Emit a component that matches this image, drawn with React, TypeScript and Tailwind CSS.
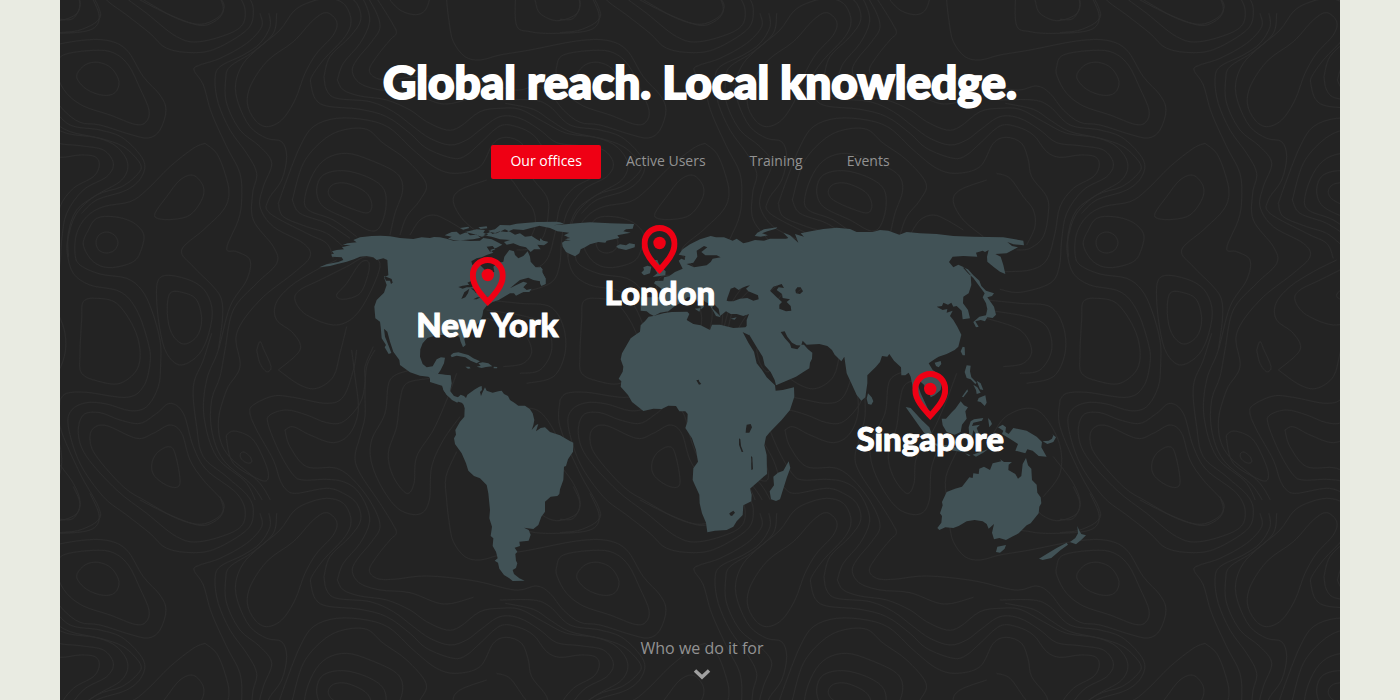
import { useState } from "react";

type Point = [number, number];

const parse = (source: string): Point[] =>
  source.split(" ").map((pair) => pair.split(",").map(Number) as Point);

/** Catmull-Rom spline through the given points. */
function smooth(source: string, closed = false): string {
  const p = parse(source);
  const n = p.length;
  const at = (i: number): Point =>
    closed ? p[(i + n) % n] : p[Math.max(0, Math.min(n - 1, i))];
  let d = `M${p[0][0]} ${p[0][1]}`;
  const last = closed ? n : n - 1;
  for (let i = 0; i < last; i++) {
    const [a, b, c, e] = [at(i - 1), at(i), at(i + 1), at(i + 2)];
    d += `C${b[0] + (c[0] - a[0]) / 6} ${b[1] + (c[1] - a[1]) / 6} ${c[0] - (e[0] - b[0]) / 6} ${c[1] - (e[1] - b[1]) / 6} ${c[0]} ${c[1]}`;
  }
  return closed ? d + "Z" : d;
}

const closedContours = [
  "50,230 75,195 115,187 155,205 177,245 165,278 130,286 80,268",
  "-10,200 10,165 100,151 160,158 205,195 240,265 267,330 258,366 225,373 150,345 70,318 20,280 -8,230",
  "800,38 830,65 820,105 770,160 735,220 705,300 665,360 620,380 585,360 562,310 575,250 625,180 700,125 760,60",
  "70,735 85,690 110,655 160,650 215,665 250,700 245,745 220,785 150,803 100,785",
  "108,728 117,705 140,696 163,705 174,728 163,751 140,759 117,751",
  "285,640 320,590 360,540 400,526 430,560 425,600 390,645 340,658 295,656",
  "325,1340 345,1360 360,1450 330,1460 285,1430 275,1395 290,1360",
  "90,1320 100,1285 140,1277 230,1315 280,1300 330,1275 365,1300 390,1380 430,1440 485,1500 490,1530 470,1555 420,1573 350,1555 260,1505 190,1460 110,1370",
  "55,1300 70,1245 120,1238 180,1260 240,1270 290,1240 330,1210 370,1240 400,1340 440,1410 530,1480 556,1540 530,1590 420,1625 350,1610 260,1540 170,1470 80,1370",
  "65,960 60,1060 65,1120 120,1145 180,1150 230,1110 240,1050 220,980 170,910 110,895 70,905",
  "330,880 370,878 410,900 425,960 410,1010 370,1032 335,1000 322,940",
  "290,900 295,840 330,826 400,845 440,880 457,940 440,1020 410,1070 360,1095 320,1060 300,990",
  "541,1362 552,1356 570,1370 575,1386 562,1389 545,1378",
  "500,1320 505,1300 530,1294 580,1320 620,1400 622,1440 590,1435 520,1390",
  "805,575 820,553 860,550 915,575 935,610 925,638 880,628 820,600",
  "770,570 790,525 850,512 920,530 970,565 978,620 960,680 930,692 870,660 790,620",
  "705,900 720,870 780,840 860,800 920,770 960,800 900,930 830,975 740,945",
  "830,885 860,850 900,790 925,785 925,820 900,880 850,898",
];

const openContours = [
  "1190,1355 1158,1430 1160,1500 1168,1570 1180,1625 1215,1670 1260,1680 1320,1665 1410,1650 1550,1623 1640,1621 1700,1650 1750,1730 1800,1785 1818,1830 1800,1890 1765,1914 1710,1903 1620,1875 1560,1867 1510,1830 1470,1780 1430,1758 1365,1770 1240,1742 1100,1728 1000,1738 950,1735 928,1710 950,1670 990,1620 1009,1600 1000,1575 960,1510 900,1420 885,1370 900,1310 915,1250 915,1180 920,1100 945,1050",
  "0,-300 20,-320 80,-323 200,-308 250,-340 270,-410 265,-470 230,-570 180,-625 90,-645 40,-680 22,-740 25,-790 50,-860 110,-915 185,-940 235,-980 240,-1010 190,-1060 120,-1085 30,-1105 -30,-1140 -80,-1172 -164,-1190",
  "832,240 850,270 900,288 980,300 1050,330 1100,365 1160,390 1200,380 1260,335 1320,325 1380,328 1450,365 1520,400 1610,413 1670,440 1703,490 1685,540 1610,585 1550,630 1525,700 1525,770",
  "1320,300 1420,300 1470,320 1530,375 1620,390 1690,415 1750,480 1745,530 1700,570 1610,600 1565,640",
  "832,240 850,190 900,130 928,70 920,20 890,-30 850,-55 800,-62 730,-60 700,-75 660,-140 625,-225 630,-255 680,-270 740,-255 800,-232 850,-235 900,-290 915,-350 915,-400 940,-460",
  "792,230 800,270 830,295 930,305 1000,335 1060,380 1110,415 1170,435 1220,420 1260,390 1320,350 1380,355 1440,390 1490,428 1560,437 1630,450 1660,490 1640,530 1570,570 1520,640 1505,720 1498,800 1470,850 1380,877 1320,868",
  "792,230 810,170 870,110 902,60 890,10 850,-20 800,-35 710,-20 680,-30 660,-60 640,-120 590,-210 570,-260 580,-285 640,-312 700,-308 800,-290 850,-310 880,-390 890,-450",
  "752,250 765,295 800,318 900,328 980,350 1050,400 1100,445 1180,475 1220,465 1260,430 1320,378 1370,380 1420,405 1460,455 1500,472 1560,465 1605,470 1618,495 1600,530 1540,565 1500,620 1485,700 1460,780 1410,810 1330,815",
  "752,250 755,230 790,180 855,110 873,60 850,10 800,-5 740,10 700,35 660,90 600,140 550,190 527,250 535,310 570,380 620,415 665,425 680,470 665,540 625,600 630,640 740,700 800,730 820,775",
  "655,610 680,540 720,440 760,380 830,355 920,360 990,385 1060,450 1130,505 1190,520 1260,500 1300,430 1340,412 1385,430 1405,480 1415,530 1460,590 1465,640 1450,710 1410,745 1370,750",
  "655,610 670,650 740,680 800,700 850,740",
  "697,600 730,490 790,420 850,390 920,388 970,430 1040,480 1098,550 1080,600 1040,650 1020,705",
  "697,600 720,640 800,670 870,715",
  "890,710 820,660 745,630 735,590 760,520 800,475 860,460 930,480 1010,520 1028,570 1005,640 990,705",
  "1310,520 1350,535 1390,590 1420,630 1425,680 1400,735",
  "435,430 470,460 495,520 507,580 490,630 430,690 365,750 400,800 460,860 485,900 487,960 475,1050",
  "435,430 400,445 330,500 260,570 210,605 130,620 80,650 50,700 45,760 60,795 120,822 200,835 245,870 275,930 300,1020 302,1090 295,1160 260,1220 210,1232 140,1212 80,1208 35,1230 25,1280 60,1390 130,1490 200,1545 270,1600 320,1645 400,1658 470,1645 560,1590 580,1540 565,1490 500,1430 430,1370 410,1280 400,1160 430,1080 455,1000",
  "600,1540 605,1580 560,1630 480,1675 420,1695 402,1710 430,1755 455,1840 500,1940 540,2020 545,2100 535,2160 500,2245 530,2255 570,2280 560,2340 510,2420 475,2550 440,2640 432,2750 470,2870 560,2950 600,3040",
  "627,1540 630,1580 600,1630 550,1665 480,1700 465,1740 475,1810 510,1890 560,1960 590,2020 578,2080 580,2160 640,2240 650,2290 590,2350 520,2430 495,2550 480,2630 455,2700 455,2790 490,2880 580,2960 627,3040",
  "650,1540 640,1600 580,1655 510,1700 497,1740 500,1810 540,1890 600,1940 635,1990 610,2060 600,2120 640,2180 730,2230 750,2270 700,2320 600,2400 530,2500 540,2600 500,2670 475,2770 500,2860 600,2950 650,3040",
  "0,1200 0,1280 60,1420 115,1520 115,1560 60,1590 0,1598",
  "-20,1370 40,1450 60,1510 40,1555 0,1558",
  "240,0 330,45 420,76 470,60 490,30 480,-10",
  "655,1110 720,1155 770,1165 820,1130 840,1060 860,980",
  "655,1110 720,1050 700,1000 650,960 648,910 690,860 760,815 830,780",
  "590,1050 600,1025 612,1050 633,1100 620,1115 600,1090 590,1050",
  "675,1290 700,1280 750,1305 820,1328 870,1300 895,1230 885,1130 875,1050",
  "675,1290 690,1340 740,1400 830,1405 890,1450 940,1520 960,1580 935,1625 890,1680 877,1715 900,1750 960,1770 1050,1778 1150,1812 1240,1792",
  "1110,1135 1040,1150 1020,1200 1010,1280 985,1360 1000,1430 1040,1480 1062,1450 1070,1370 1120,1290 1160,1200 1190,1120",
  "1050,1110 990,1140 975,1240 935,1320 935,1390 970,1470 1020,1530 1080,1542 1108,1500 1115,1400 1150,1320 1200,1250",
  "1370,1430 1368,1570 1410,1595 1490,1600 1590,1590 1618,1550 1590,1480",
  "1425,1500 1440,1540 1490,1562 1545,1545 1560,1510 1540,1460",
  "1280,540 1200,570 1180,605 1210,660 1270,710",
  "1050,705 1080,660 1120,645 1160,660 1210,690",
  "1280,900 1380,910 1470,920 1510,980 1515,1060 1480,1130 1400,1150",
  "1280,930 1400,950 1460,980 1475,1050 1440,1110 1380,1120",
  "1280,955 1380,990 1415,1050 1390,1090 1330,1100",
  "1300,1300 1337,1250 1400,1225 1450,1245 1498,1330 1500,1420 1450,1490",
];

const tiles = [-1500, 0, 1500];

function Contours() {
  return (
    <svg className="absolute inset-0 h-full w-full" aria-hidden="true">
      <defs>
        <g id="contour-lines" fill="none" stroke="#2c2c2c" strokeWidth="3">
          {closedContours.map((c) => (
            <path key={c} d={smooth(c, true)} />
          ))}
          {openContours.map((c) => (
            <path key={c} d={smooth(c)} />
          ))}
        </g>
        <pattern id="contours" width="500" height="500" patternUnits="userSpaceOnUse">
          <g transform="scale(0.33333)">
            {tiles.flatMap((x) =>
              tiles.map((y) => (
                <use key={`${x}/${y}`} href="#contour-lines" x={x} y={y} />
              )),
            )}
          </g>
        </pattern>
      </defs>
      <rect width="100%" height="100%" fill="url(#contours)" />
    </svg>
  );
}

type Region = { name: string; x: number; y: number; shapes: string[] };

const regions: Region[] = [
  {
    name: "north-america",
    x: 310,
    y: 210,
    shapes: [
      "28,172 50,163 85,156 100,150 95,142 66,140 64,133 72,131 66,124 80,120 102,118 96,112 122,105 98,105 112,100 140,97 130,90 150,82 185,78 212,77 240,79 270,84 310,87 335,82 360,84 372,81 390,82 410,86 430,92 450,90 480,93 510,92 520,84 545,88 560,95 577,104 560,113 540,120 550,128 530,135 515,142 500,145 484,154 487,165 510,165 525,180 540,190 553,185 550,170 563,160 580,155 583,140 598,120 612,124 615,135 625,145 640,138 653,124 660,140 662,155 677,172 693,172 698,188 706,205 706,222 692,224 690,214 670,210 655,203 630,210 615,222 600,235 618,226 640,215 652,219 640,232 650,240 665,236 658,246 640,246 618,257 612,250 600,250 580,262 566,270 548,276 530,287 520,300 517,318 510,333 500,345 480,365 468,378 463,388 467,405 459,412 452,395 448,380 436,376 420,379 408,374 380,376 352,384 338,400 331,418 330,440 338,462 350,472 368,469 380,448 393,442 405,443 402,460 392,480 384,492 400,494 422,497 425,520 420,545 430,559 445,564 452,558 462,560 475,578 468,590 455,578 445,575 430,570 410,555 400,540 395,522 375,515 355,500 330,497 300,487 270,465 268,450 250,425 240,395 232,365 222,356 225,380 235,405 244,429 236,432 224,412 228,405 215,385 212,350 210,335 196,325 193,290 200,270 222,248 230,225 222,202 235,196 232,150 220,145 200,150 190,142 170,138 150,140 132,148 110,155 82,162 60,168",
      "222,198 232,202 245,207 248,218 243,222 240,212 228,212",
      "422,436 430,429 445,427 475,435 490,445 510,454 500,460 482,452 466,442 440,437 425,442",
      "505,460 518,457 535,460 547,469 528,471 515,474 500,470 512,467",
      "466,470 478,470 482,475 474,476",
      "551,470 562,471 561,475 551,475",
      "404,76 425,66 440,65 450,74 470,66 480,76 500,74 512,83 490,88 460,90 430,90 414,86 425,80",
      "450,54 475,50 478,54 460,59",
      "465,66 500,58 525,60 520,68 535,74 515,80 490,72",
      "505,52 530,49 532,55 512,57",
      "520,76 540,66 560,70 585,58 600,65 615,74 630,70 645,80 665,78 680,88 693,95 715,97 702,106 682,104 692,118 672,118 662,126 648,112 630,108 610,100 590,104 582,96 600,90 570,88 545,80",
      "535,62 555,58 570,45 600,46 620,41 680,36 740,35 752,40 715,43 722,48 690,47 660,55 640,60 610,58 590,66 570,64 548,72",
      "530,110 548,108 556,118 540,125",
      "445,231 458,227 478,224 472,218 482,214 495,226 485,232 470,232 458,236",
      "454,267 463,247 478,236 474,250 466,262",
      "482,235 500,236 506,246 498,250 492,242",
      "490,268 502,262 512,262 500,268",
      "515,262 532,258 528,264 518,266",
    ],
  },
  {
    name: "south-america",
    x: 430,
    y: 370,
    shapes: [
      "0,0 20,12 62,16 62,42 58,60 72,78 84,82 92,74 102,78 108,84 112,74 135,58 148,50 155,48 156,60 150,66 153,78 158,66 165,52 170,62 188,68 205,64 215,62 222,72 234,78 240,90 255,100 265,107 285,107 300,118 308,130 313,150 310,166 305,180 318,165 325,162 318,184 332,174 345,172 360,186 390,196 418,212 430,218 429,245 414,268 408,288 402,290 400,330 390,358 388,372 382,378 362,380 345,395 345,425 334,440 325,465 310,477 282,473 296,480 302,494 296,512 268,515 270,528 254,533 262,545 256,552 258,572 262,580 258,594 248,600 252,612 268,625 284,632 248,633 238,625 222,615 208,596 204,578 194,572 203,565 198,545 188,528 190,505 182,498 186,470 178,445 180,420 175,370 170,345 150,325 132,318 115,302 108,280 95,250 75,222 72,205 78,194 76,180 90,155 103,140 104,115 98,95 90,84 82,98 66,90 52,76 42,62 38,48 0,36",
    ],
  },
  {
    name: "greenland",
    x: 540,
    y: 210,
    shapes: [
      "0,36 60,37 72,41 40,46 60,44 110,40 150,37 210,40 282,42 278,56 258,58 250,64 272,68 232,76 238,84 200,92 196,98 175,96 150,103 135,112 122,118 118,130 105,139 90,132 78,126 68,110 66,98 75,92 92,92 75,88 90,84 72,76 88,68 52,64 30,54 0,48",
      "229,109 240,103 258,106 268,100 285,103 284,112 258,120 234,115",
      "0,85 10,92 24,95 12,102 0,104",
      "0,170 8,178 6,188 17,205 17,222 4,228 0,218",
      "304,188 312,180 310,172 322,167 334,170 330,190 312,196",
      "343,150 352,150 356,160 366,174 377,184 376,196 338,201 352,190 346,180 352,172 342,166",
      "464,296 482,294 478,305",
      "572,326 590,322 584,329",
    ],
  },
  {
    name: "eurasia",
    x: 740,
    y: 210,
    shapes: [
      "-184,134 -172,118 -150,103 -120,88 -88,78 -72,82 -48,82 -22,92 -10,86 10,100 26,96 45,90 72,92 90,86 138,86 145,84 130,68 150,76 175,98 165,72 192,80 182,70 212,64 250,57 290,53 330,57 350,66 398,66 420,60 445,62 478,74 500,66 540,70 590,72 640,78 700,80 790,82 850,92 852,106 820,103 802,96 816,108 834,112 800,130 766,132 782,140 790,165 796,192 780,185 762,172 742,155 741,140 746,120 735,126 728,122 708,128 712,140 670,138 638,140 627,156 640,172 655,164 672,172 692,195 694,225 686,250 670,260 669,280 684,300 690,325 668,328 665,302 650,288 640,290 634,278 624,284 610,278 606,288 590,290 608,300 622,297 620,308 638,302 630,318 640,330 652,350 664,374 655,410 644,420 620,432 596,440 586,446 566,460 578,480 596,492 606,515 602,540 584,556 572,562 568,548 558,544 552,524 538,512 532,520 542,550 556,580 568,606 574,626 562,620 545,596 530,565 520,540 512,500 506,488 496,496 484,496 483,472 462,452 448,432 442,440 426,438 420,456 408,470 382,496 382,520 376,562 364,572 350,555 334,520 320,490 313,440 304,454 284,434 276,420 262,408 238,402 200,404 188,392 184,405 170,406 156,398 142,380 134,364 122,366 134,384 150,402 154,414 172,418 184,404 192,404 204,418 217,428 216,446 210,458 208,475 190,486 168,500 108,526 104,510 92,486 74,466 68,440 48,408 25,370 8,362 20,352 20,330 27,312 10,318 -10,312 -28,312 -42,304 -60,318 -64,296 -78,282 -84,294 -62,316 -58,322 -72,318 -82,300 -95,280 -105,275 -112,268 -125,262 -108,290 -116,298 -122,280 -140,260 -158,262 -172,275 -195,288 -215,304 -240,308 -258,318 -270,312 -280,304 -298,302 -298,262 -240,262 -236,236 -258,220 -254,213 -230,212 -228,202 -212,198 -195,186 -172,176 -184,152 -176,146 -166,150 -164,138",
      "-160,162 -140,158 -128,140 -130,122 -108,108 -98,112 -116,126 -104,136 -70,136 -58,142 -82,146 -88,156 -100,166 -138,172",
      "-38,264 -28,236 -16,232 -4,240 5,234 20,228 30,226 18,236 25,244 54,256 56,268 40,272 22,264 0,266 -20,274 -34,274 -40,272",
      "90,242 100,230 125,222 132,234 116,232 110,240 126,252 128,264 150,268 140,276 152,288 154,302 138,304 118,296 118,284 126,276 110,262",
      "166,240 172,232 182,232 189,244 180,252 168,250",
      "44,78 52,68 72,58 112,52 108,56 82,64 66,70 84,76 62,80",
      "384,550 395,562 400,574 394,584 384,582 380,566",
      "584,458 602,453 604,462 596,472 588,468",
      "668,410 674,412 675,436 668,436 662,424",
      "668,172 684,178 700,196 718,212 724,228 738,242 762,250 756,258 742,262 752,276 762,290 768,314 758,324 742,322 735,334 722,330 706,334 716,350 708,352 700,336 718,320 738,316 742,298 738,280 728,262 734,250 716,226 700,204 684,190",
      "680,466 692,467 690,484 694,502 710,518 706,522 692,508 680,504 674,486",
      "710,512 722,520 730,540 720,538",
      "700,524 712,532 722,548 710,552 708,540",
      "716,564 736,556 740,578 734,588 722,576 712,574",
      "666,560 682,538 684,544 670,562",
    ],
  },
  {
    name: "africa",
    x: 600,
    y: 300,
    shapes: [
      "146,50 160,48 190,40 215,36 262,35 268,42 260,60 280,72 302,76 330,90 336,74 360,74 400,84 436,82 450,70 448,106 432,98 428,96 446,130 462,155 470,190 486,210 500,232 525,256 527,272 548,270 582,262 583,290 570,330 545,360 510,396 498,410 493,436 500,465 501,522 484,536 450,566 455,584 454,604 430,616 428,645 410,664 400,680 380,690 345,692 322,697 318,668 306,640 299,610 298,584 285,556 278,540 280,505 294,485 288,450 276,415 256,384 262,366 263,342 256,334 238,334 228,318 205,317 185,327 160,326 130,333 96,306 84,285 62,260 64,244 56,236 68,215 70,200 62,178 66,160 82,132 92,115 110,102 120,95 122,76 136,62",
      "440,374 452,372 456,382 448,398 437,398 438,386",
      "417,415 421,418 423,438 430,456 425,456 417,434",
      "453,468 457,472 459,508 454,510",
      "388,640 400,632 405,638 396,648 390,646",
      "289,241 296,239 298,245 304,252 297,254",
      "566,484 571,504 560,534 548,572 540,598 528,603 513,598 509,574 522,556 520,530 534,518 550,512",
    ],
  },
  {
    name: "oceania",
    x: 840,
    y: 340,
    shapes: [
      "197,201 212,204 245,240 268,262 276,284 274,298 262,292 240,262 222,236",
      "275,308 310,314 345,322 386,330 384,336 350,334 300,324",
      "305,236 318,236 336,216 346,206 362,184 372,196 384,202 376,214 380,236 366,254 362,276 344,284 320,276 308,256",
      "386,262 392,244 402,238 430,234 426,242 400,248 396,258 420,254 410,264 418,284 406,280 400,270 396,292 388,290",
      "444,234 452,242 456,252 448,262",
      "398,344 420,336 444,328 430,338 408,350",
      "375,340 392,346 386,348",
      "474,262 488,254 498,262 496,276 506,282 520,264 560,272 590,290 606,306 604,322 620,350 596,348 578,332 562,328 556,340 526,332 534,312 506,294 486,282 490,272",
      "608,304 626,302 636,296 640,286 634,280 648,292 640,306 622,312",
      "292,564 304,548 306,528 300,520 308,496 306,486 320,456 345,446 366,440 388,412 398,414 400,400 416,402 418,386 432,380 450,390 458,370 484,364 480,358 492,366 516,366 506,374 505,390 526,402 534,416 544,408 548,372 558,354 564,376 574,386 576,420 590,434 592,458 602,472 604,490 598,500 596,520 572,550 560,556 536,580 516,590 498,600 478,594 462,598 456,578 462,552 446,566 440,552 428,544 404,540 380,544 356,558 340,564 316,562 298,570",
      "472,620 498,615 494,626 480,638 468,636",
      "712,558 718,572 724,582 738,586 726,598 708,613 690,606 706,594 714,580",
      "597,656 620,642 650,624 680,608 684,614 662,630 634,654 608,660",
    ],
  },
];

const toPath = (shape: string) => `M${shape.replace(/ /g, "L")}Z`;

function WorldMap() {
  return (
    <svg viewBox="318 220 770 362" className="block w-full" role="img" aria-label="World map">
      {regions.map((r) => (
        <path
          key={r.name}
          transform={`translate(${r.x} ${r.y}) scale(0.33333)`}
          d={r.shapes.map(toPath).join("")}
          fill="#415256"
          fillRule="evenodd"
        />
      ))}
    </svg>
  );
}

const offices = [
  { city: "New York", place: "left-[22%] top-[10.2%]" },
  { city: "London", place: "left-[44.4%] top-[1.4%]" },
  { city: "Singapore", place: "left-[79.5%] top-[41.7%]" },
];

function Pin() {
  return (
    <svg width="36" height="49" viewBox="0 0 36 49" aria-hidden="true">
      <path
        fill="#ef0014"
        fillRule="evenodd"
        d="M18 0C8 0 0 8 0 18.5C0 30 9 39.500 18 49C27 39.500 36 30 36 18.500C36 8 28 0 18 0ZM18 6C24.800 6 30 11.500 30 18.500C30 27 24 33.500 18 40.500C12 33.500 6 27 6 18.500C6 11.500 11.200 6 18 6Z"
      />
      <circle cx="18" cy="18" r="6.200" fill="#ef0014" />
    </svg>
  );
}

const tabs = ["Our offices", "Active Users", "Training", "Events"];

export default function App() {
  const [active, setActive] = useState(tabs[0]);
  return (
    <div className="min-h-screen bg-[#e9ebe2] px-15 font-['Open_Sans',sans-serif]">
      <section className="relative flex min-h-screen flex-col items-center bg-[#232323] pt-12">
        <Contours />
        <h1 className="relative text-center font-['Lato',sans-serif] text-[46px] leading-17 font-black text-white [-webkit-text-stroke:2px_white]">
          Global reach. Local knowledge.
        </h1>
        <div role="tablist" className="relative mt-[29px] flex flex-wrap justify-center gap-1.5">
          {tabs.map((tab) => (
            <button
              key={tab}
              type="button"
              role="tab"
              aria-selected={tab === active}
              onClick={() => setActive(tab)}
              className={
                tab === active
                  ? "h-[34px] cursor-pointer rounded-xs bg-[#ef0014] px-[19px] pb-0.5 text-sm font-medium text-white"
                  : "h-[34px] cursor-pointer rounded-xs px-[19px] pb-0.5 text-sm text-[#929292]"
              }
            >
              {tab}
            </button>
          ))}
        </div>
        <div className="relative mt-[41px] ml-1.5 w-full max-w-[770px]">
          <WorldMap />
          {offices.map((office) => (
            <div
              key={office.city}
              className={`absolute flex -translate-x-1/2 flex-col items-center ${office.place}`}
            >
              <Pin />
              <span className="font-['Lato',sans-serif] text-[33px] leading-9 font-black whitespace-nowrap text-white [-webkit-text-stroke:1px_white]">
                {office.city}
              </span>
            </div>
          ))}
        </div>
        <a
          href="#clients"
          className="relative mt-auto ml-1 flex flex-col items-center gap-2 pb-5 text-base leading-6 text-[#929292]"
        >
          Who we do it for
          <svg width="18" height="12" viewBox="0 0 18 12" aria-hidden="true">
            <path d="M2 2.500L9 9L16 2.500" fill="none" stroke="#a0a0a0" strokeWidth="3.500" />
          </svg>
        </a>
      </section>
    </div>
  );
}
